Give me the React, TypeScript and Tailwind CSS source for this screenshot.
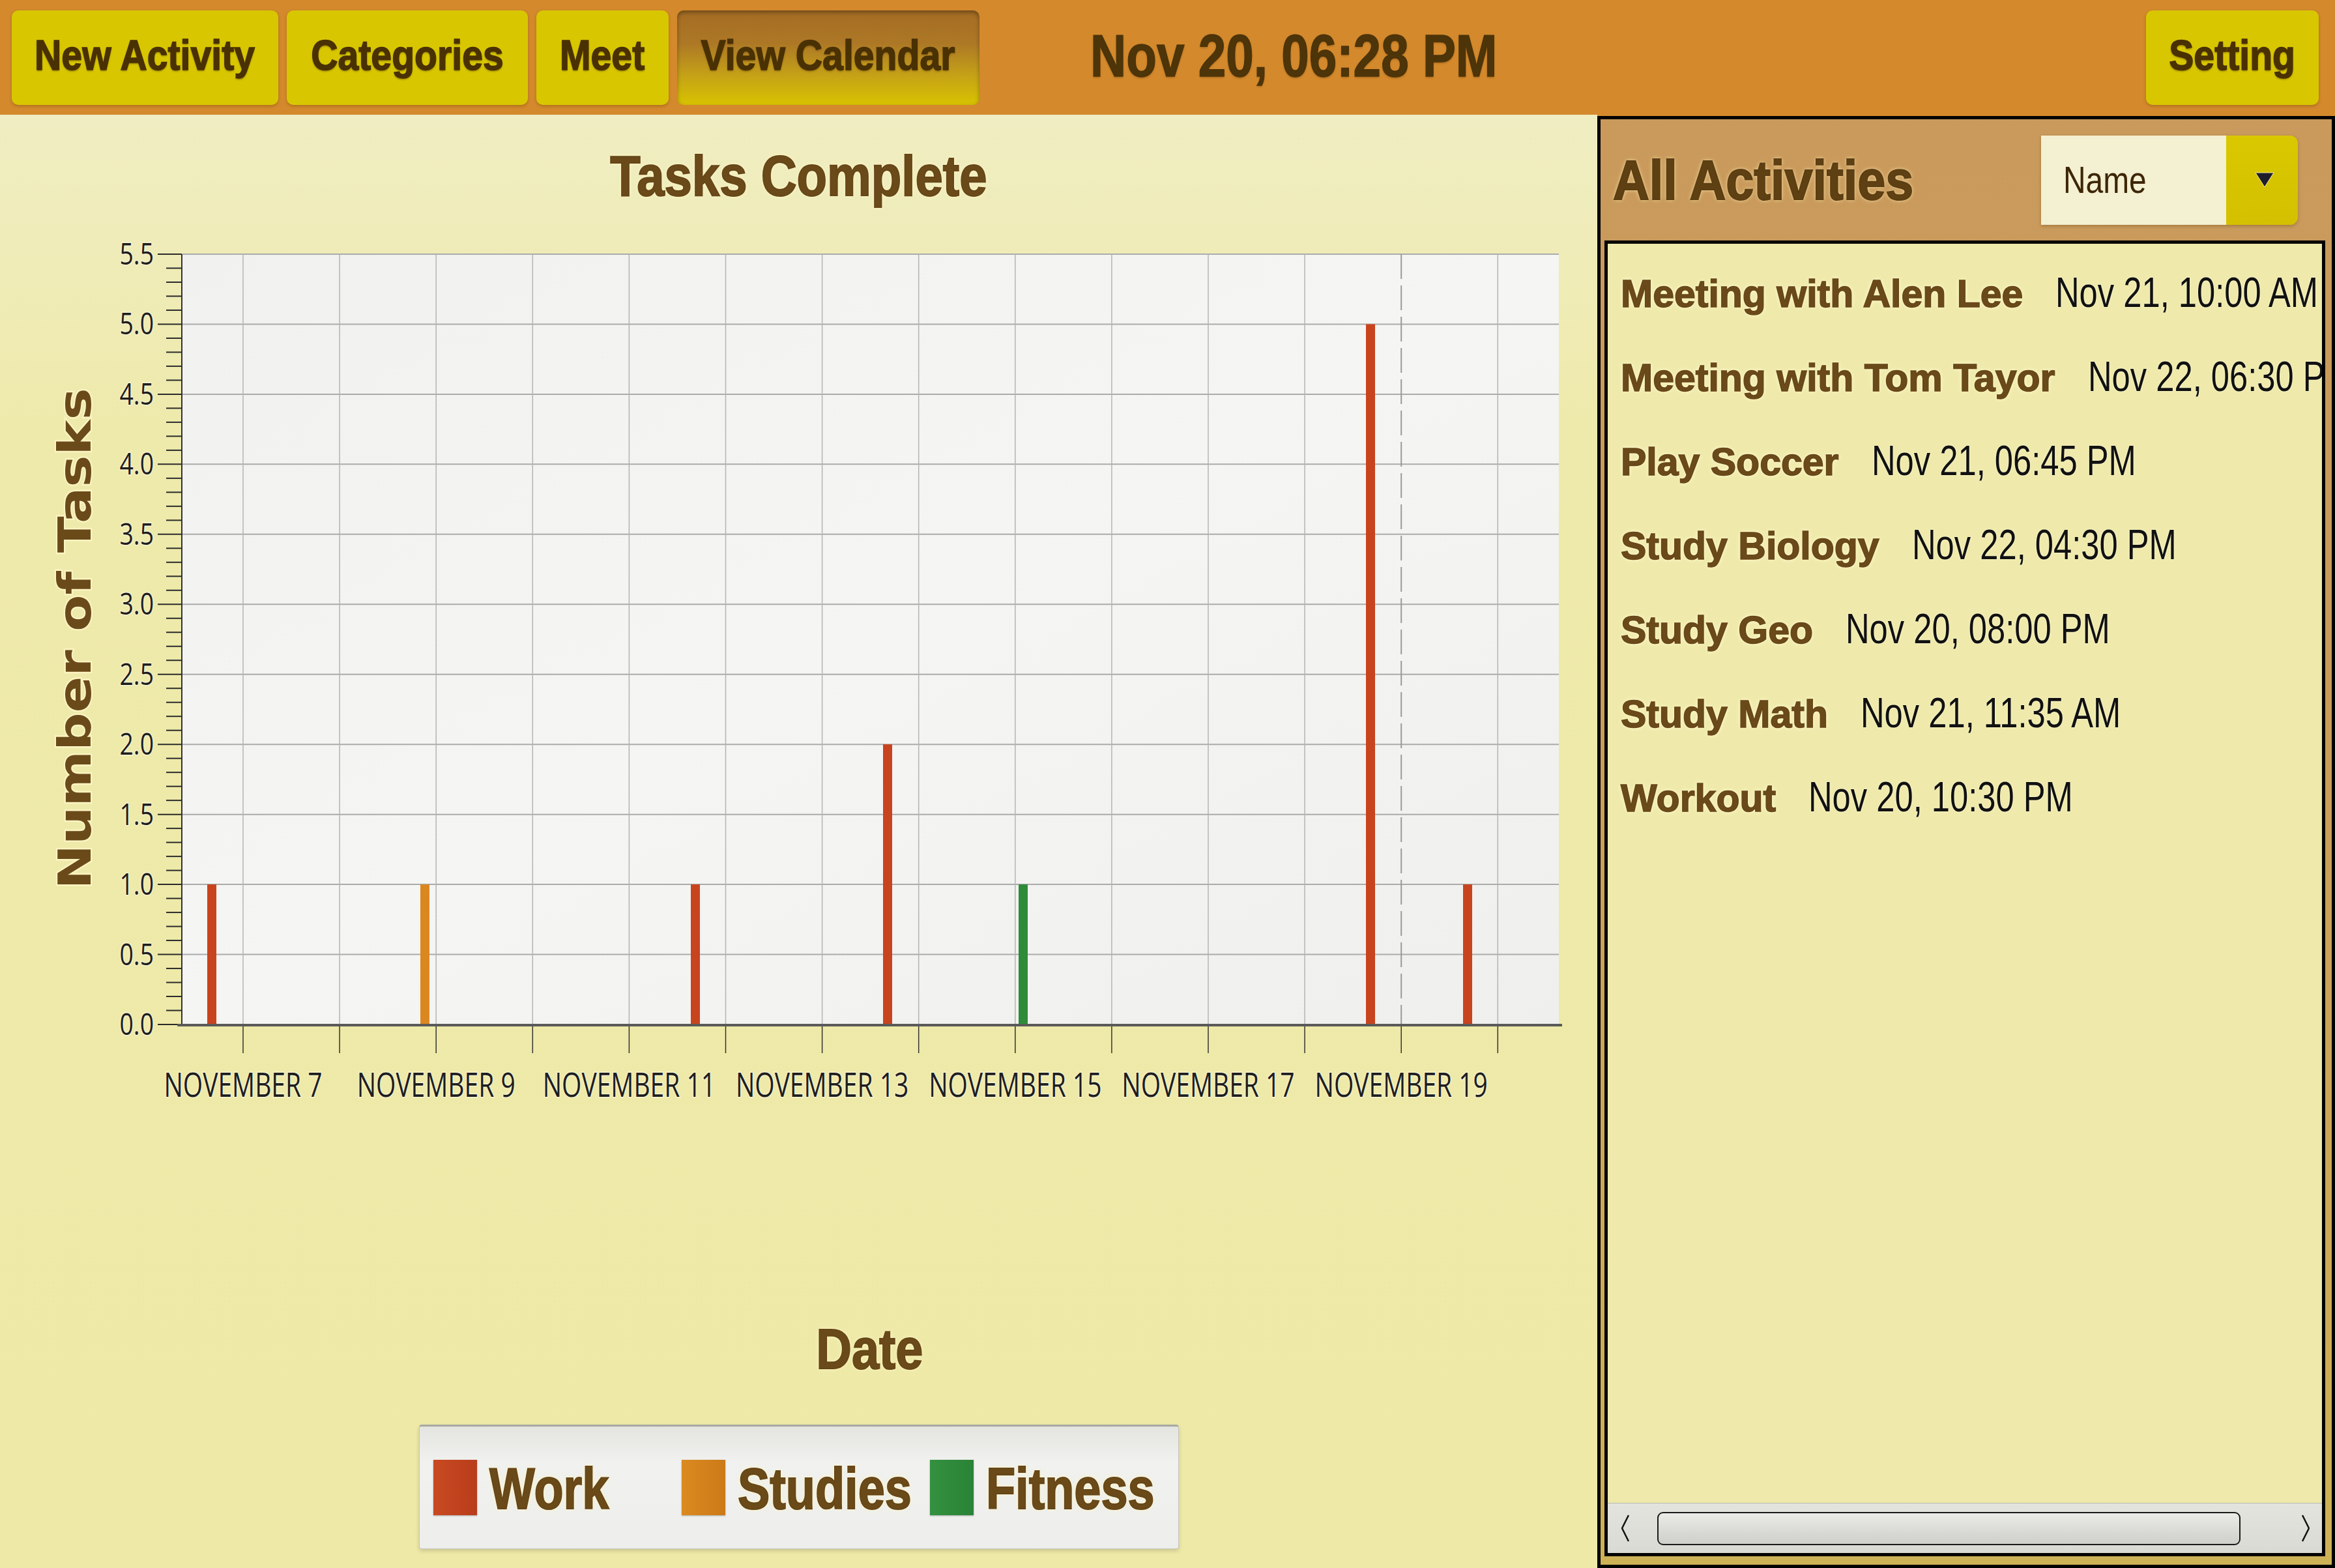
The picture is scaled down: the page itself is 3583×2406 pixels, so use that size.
import React from "react";

const WORK = "#c8441e";
const STUDIES = "#db8720";
const FITNESS = "#2e8b3a";

const PLOT_L = 280;
const PLOT_R = 2392;
const PLOT_T = 50;
const PLOT_B = 1232;
const UNIT = (PLOT_B - PLOT_T) / 5.5;
const yOf = (v: number) => PLOT_B - v * UNIT;
const gridX = Array.from({ length: 14 }, (_, i) => 373 + i * 148.1);

const bars = [
  { x: 325, v: 1, c: WORK },
  { x: 652, v: 1, c: STUDIES },
  { x: 1067, v: 1, c: WORK },
  { x: 1362, v: 2, c: WORK },
  { x: 1570, v: 1, c: FITNESS },
  { x: 2103, v: 5, c: WORK },
  { x: 2252, v: 1, c: WORK },
];

const activities = [
  { name: "Meeting with Alen Lee", date: "Nov 21, 10:00 AM" },
  { name: "Meeting with Tom Tayor", date: "Nov 22, 06:30 PM" },
  { name: "Play Soccer", date: "Nov 21, 06:45 PM" },
  { name: "Study Biology", date: "Nov 22, 04:30 PM" },
  { name: "Study Geo", date: "Nov 20, 08:00 PM" },
  { name: "Study Math", date: "Nov 21, 11:35 AM" },
  { name: "Workout", date: "Nov 20, 10:30 PM" },
];

function TopButton({ label, w, active }: { label: string; w: string; active?: boolean }) {
  return (
    <div
      className={`${w} h-[145px] shrink-0 rounded-[10px] flex items-center justify-center ${
        active
          ? "bg-[linear-gradient(180deg,#a46c24_0%,#ad7826_35%,#c6a316_70%,#d8c300_100%)] shadow-[inset_0_3px_6px_rgba(0,0,0,0.35)]"
          : "bg-[#d8c700] shadow-[0_2px_4px_rgba(110,60,0,0.35)]"
      }`}
    >
      <span className="mb-[8px] inline-block scale-x-[0.88] whitespace-nowrap text-[65px] font-bold leading-none text-[#4a3104] [-webkit-text-stroke:1.5px_#4a3104] [text-shadow:0_2px_3px_rgba(60,30,0,0.45)]">
        {label}
      </span>
    </div>
  );
}

function Chart() {
  const ticks = Array.from({ length: 56 }, (_, k) => k);
  const labels = Array.from({ length: 12 }, (_, k) => k * 0.5);
  return (
    <svg width={2451} height={1360} className="block shrink-0">
      <defs>
        <linearGradient id="plotbg" x1="0" y1="0" x2="1" y2="1">
          <stop offset="0" stopColor="#f1f1ef" />
          <stop offset="0.5" stopColor="#f5f5f3" />
          <stop offset="1" stopColor="#efefed" />
        </linearGradient>
      </defs>
      <rect x={PLOT_L} y={PLOT_T} width={PLOT_R - PLOT_L} height={PLOT_B - PLOT_T} fill="url(#plotbg)" />
      {labels.slice(1).map((v) => (
        <line key={v} x1={PLOT_L} x2={PLOT_R} y1={yOf(v)} y2={yOf(v)} stroke="#ababab" strokeWidth={2} />
      ))}
      {gridX.map((x, i) => (
        <line
          key={i}
          x1={x}
          x2={x}
          y1={PLOT_T}
          y2={PLOT_B}
          stroke={i === 12 ? "#9a9a9a" : "#b4b4b4"}
          strokeWidth={i === 12 ? 2 : 1.5}
          strokeDasharray={i === 12 ? "38 10" : undefined}
        />
      ))}
      {bars.map((b, i) => (
        <rect key={i} x={b.x - 7} y={yOf(b.v)} width={14} height={b.v * UNIT} fill={b.c} />
      ))}
      {ticks.map((k) => (
        <line
          key={k}
          x1={k % 5 === 0 ? 242 : 255}
          x2={279}
          y1={yOf(k / 10)}
          y2={yOf(k / 10)}
          stroke="#2a2a2a"
          strokeWidth={2}
        />
      ))}
      <line x1={279} x2={279} y1={PLOT_T} y2={PLOT_B + 2} stroke="#333" strokeWidth={2} />
      <line x1={272} x2={2397} y1={PLOT_B + 1} y2={PLOT_B + 1} stroke="#5a5a5a" strokeWidth={4} />
      {gridX.map((x, i) => (
        <line key={i} x1={x} x2={x} y1={PLOT_B + 3} y2={PLOT_B + 44} stroke="#333" strokeWidth={1.5} />
      ))}
      {labels.map((v) => (
        <text
          key={v}
          transform={`translate(236 ${yOf(v) + 16}) scale(0.83 1)`}
          textAnchor="end"
          fontFamily="Open Sans, sans-serif"
          fontSize={45}
          fill="#1e1e1e"
          stroke="#f7f3cf"
          strokeWidth={3}
          paintOrder="stroke"
        >
          {v.toFixed(1)}
        </text>
      ))}
      {gridX.map((x, i) =>
        i % 2 === 0 ? (
          <text
            key={i}
            transform={`translate(${x} 1343) scale(0.75 1)`}
            textAnchor="middle"
            fontFamily="Open Sans, sans-serif"
            fontSize={52}
            fill="#1e1e1e"
            stroke="#f7f3cf"
            strokeWidth={3}
            paintOrder="stroke"
          >
            {`NOVEMBER ${7 + i}`}
          </text>
        ) : null
      )}
      <text
        transform="translate(139 640) rotate(-90) scale(1 0.84)"
        textAnchor="middle"
        fontFamily="DejaVu Sans, sans-serif"
        fontWeight="bold"
        fontSize={82}
        fill="#6b4a1a"
        stroke="#fbf4c2"
        strokeWidth={5}
        paintOrder="stroke"
      >
        Number of Tasks
      </text>
    </svg>
  );
}

function Arrow({ dir }: { dir: "left" | "right" }) {
  return (
    <svg width={12} height={42} viewBox="0 0 12 42" className="shrink-0">
      <polyline
        points={dir === "left" ? "11,1 1,21 11,41" : "1,1 11,21 1,41"}
        fill="none"
        stroke="#111"
        strokeWidth={2.5}
      />
    </svg>
  );
}

export default function App() {
  const glow = "[text-shadow:0_0_4px_#fffbd6,0_0_8px_#fff6c0]";
  return (
    <div className="w-[3583px] h-[2406px] overflow-hidden flex flex-col font-['Liberation_Sans',Arial,sans-serif]">
      {/* Top bar */}
      <div className="h-[176px] shrink-0 bg-[#d3892c] flex items-center pl-[18px] pr-[25px] gap-[13px]">
        <TopButton label="New Activity" w="w-[409px]" />
        <TopButton label="Categories" w="w-[370px]" />
        <TopButton label="Meet" w="w-[203px]" />
        <TopButton label="View Calendar" w="w-[464px]" active />
        <div className="ml-[157px] mb-[6px] flex">
          <span className="inline-block origin-left scale-x-[0.84] whitespace-nowrap text-[91px] font-bold leading-none text-[#4d3409] [-webkit-text-stroke:1.5px_#4d3409] [text-shadow:0_2px_3px_rgba(80,40,0,0.35)]">
            Nov 20, 06:28 PM
          </span>
        </div>
        <div className="flex-1" />
        <TopButton label="Setting" w="w-[265px]" />
      </div>

      <div className="flex flex-1 min-h-0">
        {/* Left: chart */}
        <div className="w-[2451px] shrink-0 flex flex-col bg-[linear-gradient(180deg,#f0edc2_0%,#eeeaab_22%,#eee9a6_100%)]">
          <div className="pt-[50px] flex justify-center">
            <span className={`inline-block scale-x-[0.875] whitespace-nowrap text-[87px] font-bold leading-none text-[#6b4a1a] [-webkit-text-stroke:2px_#664517] ${glow}`}>
              Tasks Complete
            </span>
          </div>
          <div className="mt-[27px]">
            <Chart />
          </div>
          <div className="mt-[326px] pl-[217px] flex justify-center">
            <span className={`inline-block scale-x-[0.86] text-[88px] font-bold leading-none text-[#6b4a1a] [-webkit-text-stroke:2px_#664517] ${glow}`}>
              Date
            </span>
          </div>
          <div className="mt-[72px] mx-auto w-[1166px] h-[191px] rounded-[4px] border border-[#c6c6c0] border-t-[3px] border-t-[#a9a9a4] bg-[linear-gradient(180deg,#e4e4e0_0%,#f1f1ef_30%,#ededeb_100%)] shadow-[0_3px_6px_rgba(0,0,0,0.15)] grid grid-cols-[381px_381px_1fr] items-center pl-[21px]">
            {[
              { label: "Work", color: "bg-[linear-gradient(90deg,#c94a22,#b93d1b)]" },
              { label: "Studies", color: "bg-[linear-gradient(90deg,#db8a20,#cb7a18)]" },
              { label: "Fitness", color: "bg-[linear-gradient(90deg,#33913f,#2a8337)]" },
            ].map((it) => (
              <div key={it.label} className="flex items-center">
                <div className={`w-[67px] h-[85px] shrink-0 ${it.color} shadow-[0_1px_2px_rgba(0,0,0,0.3)]`} />
                <span className={`ml-[19px] mt-[4px] inline-block origin-left scale-x-[0.83] whitespace-nowrap text-[89px] font-bold leading-none text-[#6b4a1a] [-webkit-text-stroke:2px_#664517] ${glow}`}>
                  {it.label}
                </span>
              </div>
            ))}
          </div>
        </div>

        {/* Right: all activities */}
        <div className="flex-1 pt-[2px] bg-[#d3892c] flex min-w-0">
          <div className="flex-1 flex flex-col border-[5px] border-black bg-[linear-gradient(180deg,#c99a5c_0%,#c99c5a_40%,#ceb256_100%)] min-w-0">
            <div className="h-[186px] shrink-0 flex items-center justify-between pl-[19px] pr-[52px]">
              <span className="inline-block origin-left scale-x-[0.91] whitespace-nowrap text-[85px] font-bold leading-none text-[#5e4013] [-webkit-text-stroke:2px_#5a3d12] [text-shadow:0_0_4px_#f5dca0,0_0_8px_#f0d596]">
                All Activities
              </span>
              <div className="flex h-[137px] w-[394px] shrink-0 shadow-[0_2px_5px_rgba(80,50,0,0.3)] rounded-r-[12px]">
                <div className="w-[284px] bg-[#f4f0d2] flex items-center pl-[34px]">
                  <span className="inline-block origin-left scale-x-[0.84] text-[57px] leading-none text-[#3d2606]">Name</span>
                </div>
                <div className="flex-1 rounded-r-[12px] bg-[linear-gradient(180deg,#d9c800_0%,#d4c000_100%)] flex items-center justify-center pl-[8px]">
                  <svg width={30} height={24} viewBox="0 0 30 24">
                    <polygon points="1,1 29,1 15,23" fill="#1d1d2c" stroke="#f4e79a" strokeWidth={1} />
                  </svg>
                </div>
              </div>
            </div>

            <div className="flex-1 min-h-0 ml-[6px] mr-[10px] mb-[13px] border-[5px] border-black bg-[#efeaab] flex flex-col overflow-hidden">
              <div className="flex-1 pt-[10px] pl-[20px]">
                {activities.map((a) => (
                  <div key={a.name} className="h-[129px] flex items-center whitespace-nowrap">
                    <div className="flex items-baseline">
                      <span className={`text-[59px] font-bold leading-none text-[#6b4a1a] [-webkit-text-stroke:1.5px_#664517] ${glow}`}>{a.name}</span>
                      <span className="ml-[50px] inline-block origin-left scale-x-[0.78] text-[65px] leading-none text-[#111] [text-shadow:0_0_3px_#fffbe0]">
                        {a.date}
                      </span>
                    </div>
                  </div>
                ))}
              </div>
              <div className="h-[77px] shrink-0 border-t border-[#b9b9b1] bg-[linear-gradient(180deg,#e4e4de_0%,#dadad4_100%)] flex items-center">
                <div className="ml-[21px]">
                  <Arrow dir="left" />
                </div>
                <div className="ml-[43px] w-[895px] h-[51px] rounded-[9px] border-2 border-[#1a1a1a] bg-[linear-gradient(180deg,#ebebe7_0%,#d9d9d5_60%,#cfcfcb_100%)]" />
                <div className="flex-1" />
                <div className="mr-[19px]">
                  <Arrow dir="right" />
                </div>
              </div>
            </div>
          </div>
        </div>
      </div>
    </div>
  );
}
